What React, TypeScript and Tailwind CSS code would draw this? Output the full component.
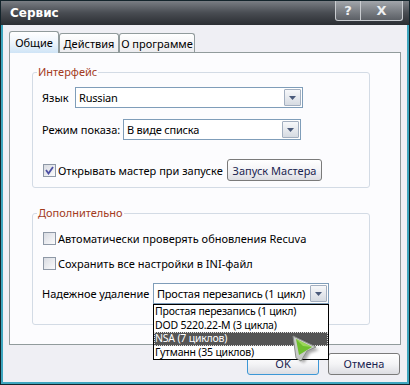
import React from "react";

function DropButton() {
  return (
    <div className="mr-[1px] flex h-[17px] w-[17px] shrink-0 items-center justify-center rounded-[1px] border border-[#a3afc0] bg-linear-to-b from-[#f7f8fa] to-[#d6dbe2]">
      <svg width="7" height="4" viewBox="0 0 7 4">
        <path d="M0 0h7L3.5 4z" fill="#4a5a7a" />
      </svg>
    </div>
  );
}

function Combo({ value, width }: { value: string; width: string }) {
  return (
    <div className={`flex h-[21px] ${width} items-center border border-[#7f9db9] bg-white`}>
      <span className="min-w-0 flex-1 overflow-hidden whitespace-nowrap pl-[3px] text-[11px] leading-[13px] tracking-[-0.2px] text-black">
        {value}
      </span>
      <DropButton />
    </div>
  );
}

function Check({ checked }: { checked?: boolean }) {
  return (
    <div className="flex h-[13px] w-[13px] shrink-0 items-center justify-center border border-[#8e98a6] bg-linear-to-br from-[#d8dbe2] to-[#fbfbfc]">
      {checked && (
        <svg width="9" height="9" viewBox="0 0 9 9">
          <path d="M1 4l2.5 3.5L8 1" fill="none" stroke="#4c4fa3" strokeWidth="1.8" />
        </svg>
      )}
    </div>
  );
}

function Button({ label, width, blue }: { label: string; width: string; blue?: boolean }) {
  return (
    <div
      className={`flex h-[22px] ${width} items-center justify-center rounded-[3px] border ${
        blue ? "border-[#3c97d6]" : "border-[#7a7a7a]"
      } bg-linear-to-b from-[#ffffff] via-[#f4f4f6] to-[#dcdde2] text-[11px] text-[#1a2450]`}
    >
      {label}
    </div>
  );
}

function Cursor() {
  return (
    <svg className="absolute left-[136px] top-[28px]" width="34" height="34" viewBox="0 0 34 34">
      <defs>
        <filter id="sh" x="-30%" y="-30%" width="160%" height="160%">
          <feGaussianBlur stdDeviation="1.6" />
        </filter>
      </defs>
      <path d="M6 5L29 17L20 20L14 30L9 27Z" fill="#000" opacity="0.35" filter="url(#sh)" />
      <path d="M3 3L26 14L17 18L11 28L6 25Z" fill="#c9ccc9" stroke="#8a8e8a" strokeWidth="1" />
      <path d="M6 6L22 14L9 22Z" fill="#6fbf2f" />
      <path d="M6 6L22 14L13 13Z" fill="#9bd85a" />
    </svg>
  );
}

const items = ["Простая перезапись (1 цикл)", "DOD 5220.22-M (3 цикла)", "NSA (7 циклов)", "Гутманн (35 циклов)"];

export default function App() {
  return (
    <div className="flex h-[385px] w-[410px] flex-col border border-[#13242b] font-['Noto_Sans','DejaVu_Sans',sans-serif]">
      <div className="flex h-[24px] shrink-0 items-start justify-between bg-linear-to-b from-[#7a7e84] via-[#484c52] to-[#2b2e33] pl-[9px] pr-[6px]">
        <span className="mt-[5px] font-['DejaVu_Sans',sans-serif] text-[12px] font-bold leading-[14px] text-white">
          Сервис
        </span>
        <div className="flex h-[20px] rounded-b-[3px] border border-t-0 border-[#c9ccd0] bg-linear-to-b from-[#a2a6ab] to-[#5b5f65]">
          <div className="flex w-[25px] items-center justify-center border-r border-[#c9ccd0] font-['DejaVu_Sans',sans-serif] text-[13px] font-bold text-[#eef0f2]">
            ?
          </div>
          <div className="flex w-[41px] items-center justify-center font-['DejaVu_Sans',sans-serif] text-[13px] font-bold text-[#eef0f2]">
            X
          </div>
        </div>
      </div>

      <div className="flex flex-1 flex-col border-x-[2px] border-b-[2px] border-[#3ea6bf] bg-[#efeff4]">
        <div className="ml-[6px] mt-[6px] flex h-[21px] items-end text-[11px] leading-[13px] text-black">
          <div className="relative z-10 -mb-[1px] flex h-[22px] w-[50px] items-start justify-center rounded-t-[3px] border border-b-0 border-[#919b9c] bg-linear-to-b from-[#ffffff] via-[#eef5fc] to-[#cfe4f6] pt-[4px]">
            Общие
          </div>
          <div className="flex h-[19px] w-[60px] items-start justify-center rounded-t-[3px] border border-b-0 border-[#919b9c] bg-linear-to-b from-[#ffffff] to-[#ececef] pt-[3px]">
            Действия
          </div>
          <div className="flex h-[19px] w-[76px] items-start justify-center rounded-t-[3px] border border-b-0 border-[#919b9c] bg-linear-to-b from-[#ffffff] to-[#ececef] pt-[3px]">
            О программе
          </div>
        </div>

        <div className="ml-[6px] h-[293px] w-[392px] border border-[#919b9c] bg-[#fcfcfe] pl-[22px] pt-[12px] text-[11px] leading-[13px] text-black">
          <fieldset className="w-[338px] rounded-[3px] border border-[#d3dbe5] p-0">
            <legend className="ml-[4px] px-[1px] leading-[14px] text-[#a33b1d]">Интерфейс</legend>
            <div className="pb-[6px] pl-[9px]">
              <div className="mt-[8px] flex h-[21px] items-center">
                <span className="w-[33px]">Язык</span>
                <Combo value="Russian" width="w-[228px]" />
              </div>
              <div className="mt-[11px] flex h-[21px] items-center">
                <span className="w-[81px]">Режим показа:</span>
                <Combo value="В виде списка" width="w-[178px]" />
              </div>
              <div className="mt-[19px] flex h-[22px] items-center">
                <div className="ml-[1px]">
                  <Check checked />
                </div>
                <span className="ml-[2px] w-[169px]">Открывать мастер при запуске</span>
                <Button label="Запуск Мастера" width="w-[95px]" />
              </div>
            </div>
          </fieldset>

          <fieldset className="mt-[18px] w-[338px] rounded-[3px] border border-[#d3dbe5] p-0">
            <legend className="ml-[4px] px-[1px] leading-[14px] text-[#a33b1d]">Дополнительно</legend>
            <div className="pb-[20px] pl-[9px]">
              <div className="mt-[11px] flex h-[14px] items-center">
                <div className="ml-[1px]">
                  <Check />
                </div>
                <span className="ml-[2px]">Автоматически проверять обновления Recuva</span>
              </div>
              <div className="mt-[11px] flex h-[14px] items-center">
                <div className="ml-[1px]">
                  <Check />
                </div>
                <span className="ml-[2px]">Сохранить все настройки в INI-файл</span>
              </div>
              <div className="mt-[13px] flex h-[21px] items-center">
                <span className="w-[111px]">Надежное удаление</span>
                <div className="relative">
                  <Combo value="Простая перезапись (1 цикл)" width="w-[176px]" />
                  <div className="absolute left-0 top-full z-20 w-[176px] border border-black bg-white">
                    {items.map((it, i) =>
                      i === 2 ? (
                        <div
                          key={it}
                          className="flex h-[13.5px] items-center overflow-hidden border border-dotted border-[#e0e0e0] bg-[#555555] text-[10.5px] leading-[11px] tracking-[-0.2px] text-white"
                        >
                          {it}
                        </div>
                      ) : (
                        <div
                          key={it}
                          className="flex h-[13.5px] items-center overflow-hidden whitespace-nowrap pl-[1px] text-[10.5px] leading-[11px] tracking-[-0.2px]"
                        >
                          {it}
                        </div>
                      )
                    )}
                    <Cursor />
                  </div>
                </div>
              </div>
            </div>
          </fieldset>
        </div>

        <div className="mt-[8px] flex justify-end gap-[9px] pr-[7px]">
          <Button label="OK" width="w-[72px]" blue />
          <Button label="Отмена" width="w-[72px]" />
        </div>
      </div>
    </div>
  );
}
